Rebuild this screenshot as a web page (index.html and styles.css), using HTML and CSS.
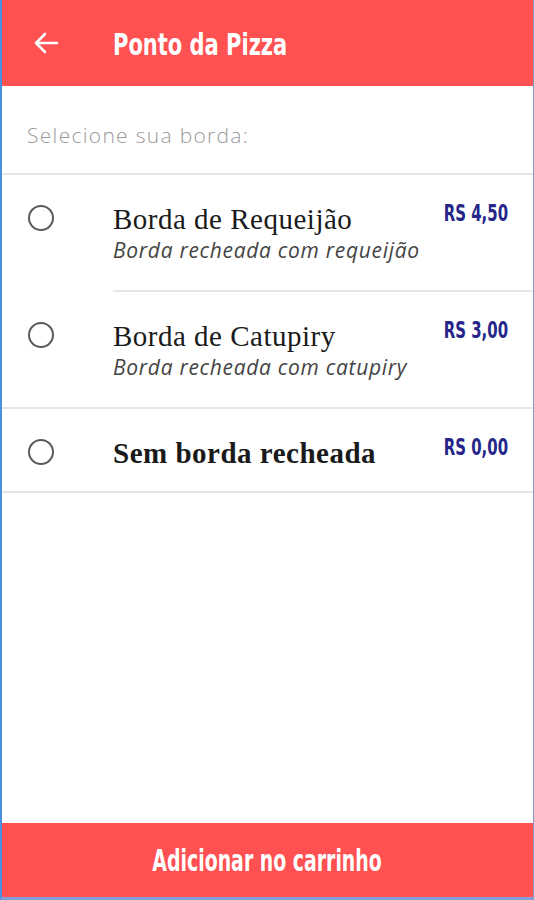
FILE: index.html
```html
<!DOCTYPE html>
<html>
<head>
    <meta name="viewport" content="width=device-width, initial-scale=1.0">
    <link rel="stylesheet" href="styles.css">
</head>
<body>
    <div class="screen">
        <div class="toolbar">
            <svg class="back" width="26" height="24" viewBox="0 0 26 24">
                <path d="M24 12H3M12 3L3 12l9 9" fill="none" stroke="#fff" stroke-width="2.6" stroke-linecap="round" stroke-linejoin="round"/>
            </svg>
            <div class="toolbar-title">Ponto da Pizza</div>
        </div>

        <div class="content">
            <div class="hint">Selecione sua borda:</div>

            <div class="option">
                <div class="radio"></div>
                <div class="option-body">
                    <div class="option-name">Borda de Requeijão</div>
                    <div class="option-desc">Borda recheada com requeijão</div>
                </div>
                <div class="price">RS 4,50</div>
            </div>

            <div class="option option-last">
                <div class="radio"></div>
                <div class="option-body">
                    <div class="option-name">Borda de Catupiry</div>
                    <div class="option-desc">Borda recheada com catupiry</div>
                </div>
                <div class="price">RS 3,00</div>
            </div>

            <div class="option option-none">
                <div class="radio"></div>
                <div class="option-body">
                    <div class="option-name bold">Sem borda recheada</div>
                </div>
                <div class="price">RS 0,00</div>
            </div>
        </div>

        <button class="add-btn"><span>Adicionar no carrinho</span></button>
    </div>
</body>
</html>
```

FILE: styles.css
```css
html, body {
    margin: 0;
    height: 100%;
}

body {
    background: #fff;
    font-family: "Open Sans", sans-serif;
}

.screen {
    display: flex;
    flex-direction: column;
    height: 100vh;
    box-sizing: border-box;
    border-left: 2px solid #4a8ee0;
    border-right: 1px solid #8a9bc0;
    border-bottom: 3px solid #7f9fd6;
}

.toolbar {
    display: flex;
    align-items: center;
    height: 86px;
    background: #ff5151;
    flex-shrink: 0;
}

.back {
    margin-left: 31px;
    margin-right: 54px;
}

/* condensed look: no narrow family installed, so squeeze the bold sans */
.toolbar-title {
    color: #fff;
    font-family: "DejaVu Sans", sans-serif;
    font-weight: bold;
    font-size: 30px;
    transform: scaleX(0.7);
    transform-origin: left center;
    margin-top: 2px;
}

.content {
    flex: 1;
}

.hint {
    padding: 0 25px;
    height: 89px;
    display: flex;
    align-items: center;
    padding-top: 10px;
    box-sizing: border-box;
    color: #9a9a9a;
    font-weight: 300;
    font-size: 21px;
    letter-spacing: 1.3px;
    border-bottom: 2px solid #e6e6e6;
}

.option {
    display: flex;
    align-items: flex-start;
    position: relative;
    height: 117px;
    box-sizing: border-box;
    padding-top: 29px;
}

.option::after {
    content: "";
    position: absolute;
    left: 111px;
    right: 0;
    bottom: 0;
    border-bottom: 2px solid #e6e6e6;
}

.option-last::after {
    left: 0;
}

.option-none {
    height: 84px;
    padding-top: 29px;
}

.option-none::after {
    left: 0;
}

.radio {
    width: 26px;
    height: 26px;
    border: 2.5px solid #5a5a5a;
    border-radius: 50%;
    margin-left: 26px;
    margin-right: 59px;
    flex-shrink: 0;
    box-sizing: border-box;
    margin-top: 1px;
}

.option-body {
    flex: 1;
    min-width: 0;
}

.option-name {
    font-family: "Liberation Serif", "DejaVu Serif", serif;
    font-size: 29px;
    color: #1a1a1a;
    line-height: 30px;
    letter-spacing: 0.5px;
}

.option-name.bold {
    font-weight: bold;
}

.option-desc {
    font-style: italic;
    font-size: 21px;
    color: #444;
    margin-top: 2px;
    letter-spacing: 0.7px;
    white-space: nowrap;
}

.price {
    font-family: "DejaVu Sans", sans-serif;
    font-weight: bold;
    font-size: 23px;
    color: #26268a;
    margin-right: 25px;
    margin-top: -4px;
    transform: scaleX(0.65);
    transform-origin: right center;
}

.add-btn {
    height: 74px;
    border: none;
    background: #ff5151;
    color: #fff;
    font-family: "DejaVu Sans", sans-serif;
    font-weight: bold;
    font-size: 30px;
    flex-shrink: 0;
    padding: 0;
}

.add-btn span {
    display: inline-block;
    transform: scaleX(0.63);
}
```
